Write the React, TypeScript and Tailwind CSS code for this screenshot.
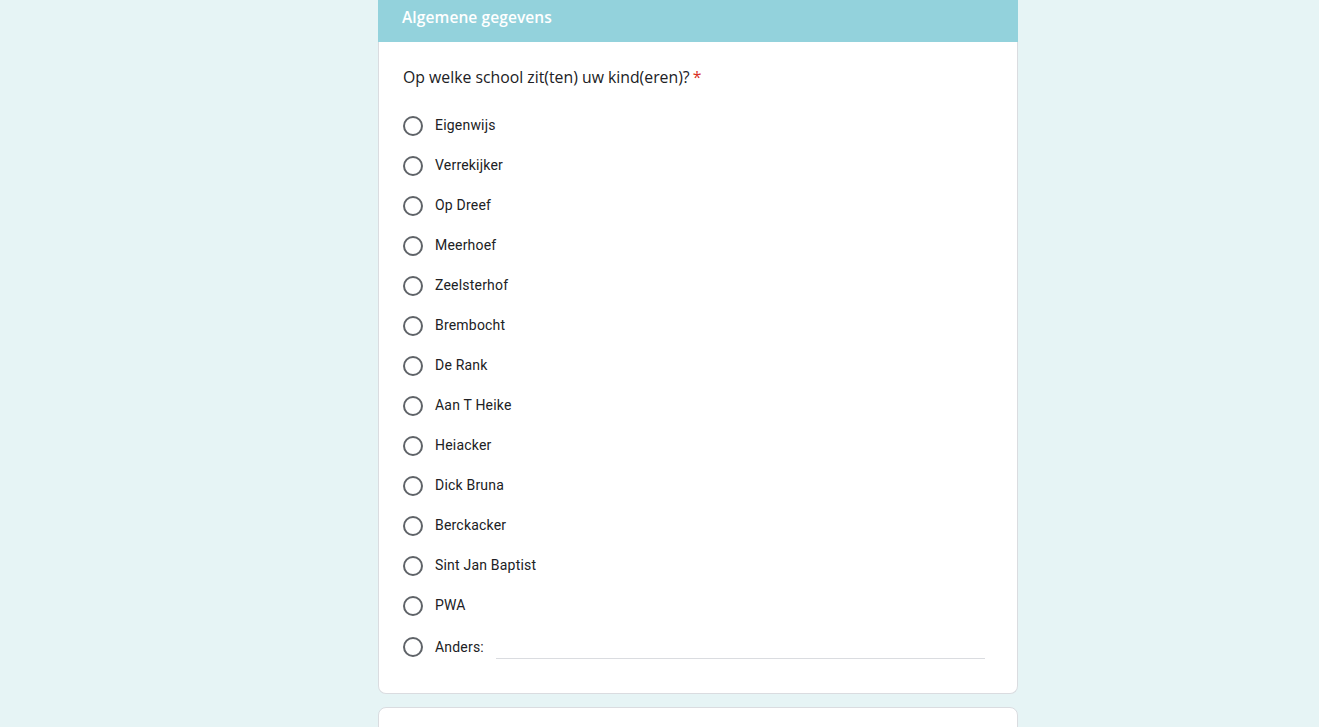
import React from "react";

const options = [
  "Eigenwijs",
  "Verrekijker",
  "Op Dreef",
  "Meerhoef",
  "Zeelsterhof",
  "Brembocht",
  "De Rank",
  "Aan T Heike",
  "Heiacker",
  "Dick Bruna",
  "Berckacker",
  "Sint Jan Baptist",
  "PWA",
];

function Radio() {
  return <div className="w-5 h-5 rounded-full border-2 border-[#5f6368] shrink-0" />;
}

export default function App() {
  return (
    <div className="min-h-[727px] h-[727px] overflow-hidden bg-[#e6f4f5] flex justify-center pl-[77px]">
      <div className="w-[640px] flex flex-col gap-[13px]">
        <div className="bg-white border border-t-0 border-[#dadce0] rounded-b-lg">
          <div className="h-[42px] bg-[#93d2dc] -mx-px flex items-center px-6">
            <span className="text-white text-[15.5px] font-semibold tracking-[0.1px] pb-[6px]" style={{ fontFamily: "'Open Sans', Roboto, sans-serif" }}>
              Algemene gegevens
            </span>
          </div>
          <div className="pl-6 pr-8 pt-6 pb-[25px]">
            <div className="h-6 flex items-center text-[15.8px] text-[#202124] mb-4" style={{ fontFamily: "'Open Sans', Roboto, sans-serif" }}>
              Op welke school zit(ten) uw kind(eren)?<span className="text-[#d93025] ml-[3px]">*</span>
            </div>
            <div className="flex flex-col">
              {options.map((o) => (
                <div key={o} className="h-10 flex items-center gap-3" style={{ fontFamily: "Roboto, sans-serif" }}>
                  <Radio />
                  <span className="text-[14px] text-[#202124] tracking-[0.2px] -mt-[2px]">{o}</span>
                </div>
              ))}
              <div className="h-[42px] flex items-center gap-3" style={{ fontFamily: "Roboto, sans-serif" }}>
                <Radio />
                <span className="text-[14px] text-[#202124] tracking-[0.2px]">Anders:</span>
                <div className="flex-1 self-end mb-[9px] border-b border-[#dadce0] h-0" />
              </div>
            </div>
          </div>
        </div>
        <div className="bg-white border border-[#dadce0] rounded-lg h-[100px] shrink-0" />
      </div>
    </div>
  );
}
